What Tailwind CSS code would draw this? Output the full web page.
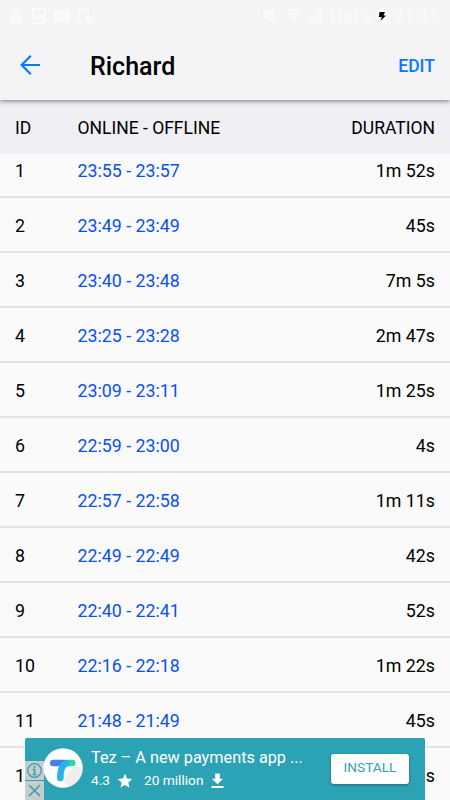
<!DOCTYPE html>
<html lang="en">
<head>
<meta charset="utf-8">
<title>Richard</title>
<script src="https://cdn.jsdelivr.net/npm/@tailwindcss/browser@4"></script>
</head>
<body class="bg-[#fafafa]">
<div class="relative flex h-[800px] w-[450px] flex-col overflow-hidden bg-[#fafafa] font-['Roboto',sans-serif] text-black">
  <header class="relative z-10 h-[100px] shrink-0 bg-[#f4f4f6] shadow-[0_1px_5px_rgba(0,0,0,0.5)]">
    <div class="flex h-8 items-center justify-between pl-[8px] pr-[11px] text-[#fbfbfc]">
      <div class="flex items-center gap-[7px]">
        <svg class="h-4 w-4" viewBox="0 0 16 16"><path fill="currentColor" d="M8 1l7.5 14H.5z"/><path stroke="#f4f4f6" stroke-width="1.500" d="M8 5.500v5M8 11.500v1.500"/></svg>
        <svg class="h-4 w-4" viewBox="0 0 16 16"><rect x="2" y="1" width="12" height="14" rx="1" fill="none" stroke="currentColor" stroke-width="1.800"/><path fill="currentColor" d="M3.500 11.500V9L6 6.500l2 2L10 5l3 4v2.500z"/></svg>
        <svg class="h-4 w-4" viewBox="0 0 16 16"><rect x="0" y="2.500" width="16" height="11.500" rx="3.500" fill="currentColor"/><path fill="#f4f4f6" d="M6 5.500l5 2.800-5 2.700z"/></svg>
        <svg class="h-4 w-4" viewBox="0 0 16 16"><path fill="none" stroke="currentColor" stroke-width="1.600" d="M7 14.200H1.500V1.200h9.500V7"/><circle cx="11.500" cy="11.500" r="4.300" fill="currentColor"/><path fill="none" stroke="#f4f4f6" d="M11.500 8.800v3h2.300"/></svg>
      </div>
      <div class="flex items-center">
        <svg class="mr-[8px] h-4 w-4" viewBox="0 0 16 16"><path fill="currentColor" d="M1 5h4l7-4v14l-7-4H1z"/><path stroke="#f4f4f6" stroke-width="2.500" d="M0 3l15 11"/><path stroke="currentColor" stroke-width="1.500" d="M1 2l14 12"/></svg>
        <svg class="mr-[4px] h-4 w-4" viewBox="0 0 16 16"><path fill="none" stroke="currentColor" stroke-width="1.600" d="M1 4.500q7-6 14 0M3 7.500q5-4 10 0M5 10.300q3-2.500 6 0"/><path fill="currentColor" d="M8 10l2 2-2 2-2-2z"/></svg>
        <svg class="mr-[5px] h-4 w-4" viewBox="0 0 16 16"><path fill="currentColor" d="M0 13h2.500v2H0zM3.500 10.500H6V15H3.500zM7 7.500h2.500V15H7zM10.500 4H12v11h-1.500zM13 0h2.500v15H13z"/></svg>
        <span class="text-[19px] leading-none">100%</span>
        <svg class="ml-[4px] mr-[7px] h-4 w-[10px]" viewBox="0 0 10 16"><path fill="currentColor" d="M0 2h3V0h4v2h3v14H0z"/><path fill="#000" d="M2.500 4H8L6.500 7.500h2.500L3.500 13l1.300-4H1.800z"/></svg>
        <span class="text-[18.2px] leading-none">21:41</span>
      </div>
    </div>
    <div class="flex h-[68px] items-center px-[15px]">
      <svg class="mb-[3px] ml-[5px] h-[20px] w-[21px]" viewBox="0 0 21 20"><path fill="none" stroke="#007aff" stroke-width="2.100" d="M20 10H2M10.800 .8L1.600 10l9.200 9.200"/></svg>
      <h1 class="ml-[49px] text-[25px] font-medium leading-none">Richard</h1>
      <span class="ml-auto pt-px text-[17.5px] font-medium leading-none text-[#0a78ff]">EDIT</span>
    </div>
  </header>
  <div class="flex h-[54px] shrink-0 items-center bg-[#efeff4] px-[15px] pt-[3px] text-[17.5px]">
    <span class="w-[62.500px]">ID</span><span>ONLINE - OFFLINE</span><span class="ml-auto">DURATION</span>
  </div>
  <main class="flex min-h-0 flex-1 flex-col justify-start overflow-hidden">
    <ul id="log" class="-mt-[11px] text-[17.800px]"></ul>
  </main>
  <aside class="absolute bottom-0 left-[25px] flex h-[62px] w-[400px] rounded-t-[2px] bg-[#2ba3b5] text-white">
    <div class="absolute bottom-0 left-0 flex w-[19px] flex-col gap-px">
      <svg class="h-[19px] w-[19px] bg-[#c9cbcc]" viewBox="0 0 19 19"><circle cx="9.500" cy="9.500" r="6.800" fill="none" stroke="#2ba3b5" stroke-width="1.300"/><path fill="none" stroke="#2ba3b5" stroke-width="1.600" d="M9.500 5v2M7.800 8.500h1.700v5M7.500 13.500h4"/></svg>
      <svg class="h-[19px] w-[19px] bg-[#c9cbcc]" viewBox="0 0 19 19"><path stroke="#2ba3b5" stroke-width="1.500" d="M4 4l11 11M15 4L4 15"/></svg>
    </div>
    <svg class="relative ml-[17.500px] mt-[10px] h-10 w-10 shrink-0" viewBox="0 0 40 40">
      <circle cx="20" cy="20" r="19.700" fill="#fff"/>
      <path fill="#eeeeef" d="M32 16L19 33l6 5.500A20 20 0 0 0 39.500 22z"/>
      <path stroke="#4c7df0" stroke-width="6.400" stroke-linecap="round" d="M10.200 15H22"/>
      <path stroke="#22dca0" stroke-width="6.400" stroke-linecap="round" d="M27 15h2.300"/>
      <path fill="none" stroke="#27b5e5" stroke-width="6.400" d="M17.300 30q0-15 8.500-15"/>
      <circle cx="17.300" cy="30" r="3.200" fill="#27b5e5"/>
    </svg>
    <div class="ml-[8.500px] flex flex-col pt-[9.500px]">
      <div class="text-[16.250px] leading-[19px]">Tez – A new payments app ...</div>
      <div class="mt-[4.500px] flex items-center text-[13.700px] leading-[18px]">
        <span>4.3</span>
        <svg class="ml-[7px] mt-px h-4 w-4" viewBox="0 0 16 16"><path fill="currentColor" d="M8 .8l2.100 4.800 5.200.5-3.900 3.500 1.100 5.200L8 12.100l-4.500 2.700 1.100-5.200L.7 6.100l5.200-.5z"/></svg>
        <span class="ml-[11px]">20 million</span>
        <svg class="ml-[8px] mt-px h-4 w-[13px]" viewBox="0 0 14 16"><path fill="currentColor" d="M4.500 0h5v5.500H13L7 11.500 1 5.500h3.500zM.5 13.500h13v2H.5z"/></svg>
      </div>
    </div>
    <div class="absolute left-[306px] top-[16px] flex h-[30px] w-[78px] items-center justify-center rounded-[3px] bg-white pb-[3px] text-[13.700px] text-[#2ba3b5] shadow-[0_1px_3px_rgba(0,0,0,0.35)]">INSTALL</div>
  </aside>
</div>
<script>
const rows = [
  ["1","23:55 - 23:57","1m 52s"],["2","23:49 - 23:49","45s"],["3","23:40 - 23:48","7m 5s"],
  ["4","23:25 - 23:28","2m 47s"],["5","23:09 - 23:11","1m 25s"],["6","22:59 - 23:00","4s"],
  ["7","22:57 - 22:58","1m 11s"],["8","22:49 - 22:49","42s"],["9","22:40 - 22:41","52s"],
  ["10","22:16 - 22:18","1m 22s"],["11","21:48 - 21:49","45s"],["1","","s"]
];
document.getElementById("log").innerHTML = rows.map(([id, time, duration]) =>
  `<li class="flex h-[55px] items-center border-b-2 border-[#e4e4e5] px-[15px] pt-[3px]"><span class="w-[62.500px]">${id}</span><span class="text-[#0b50f0]">${time}</span><span class="ml-auto">${duration}</span></li>`).join("");
</script>
</body>
</html>
